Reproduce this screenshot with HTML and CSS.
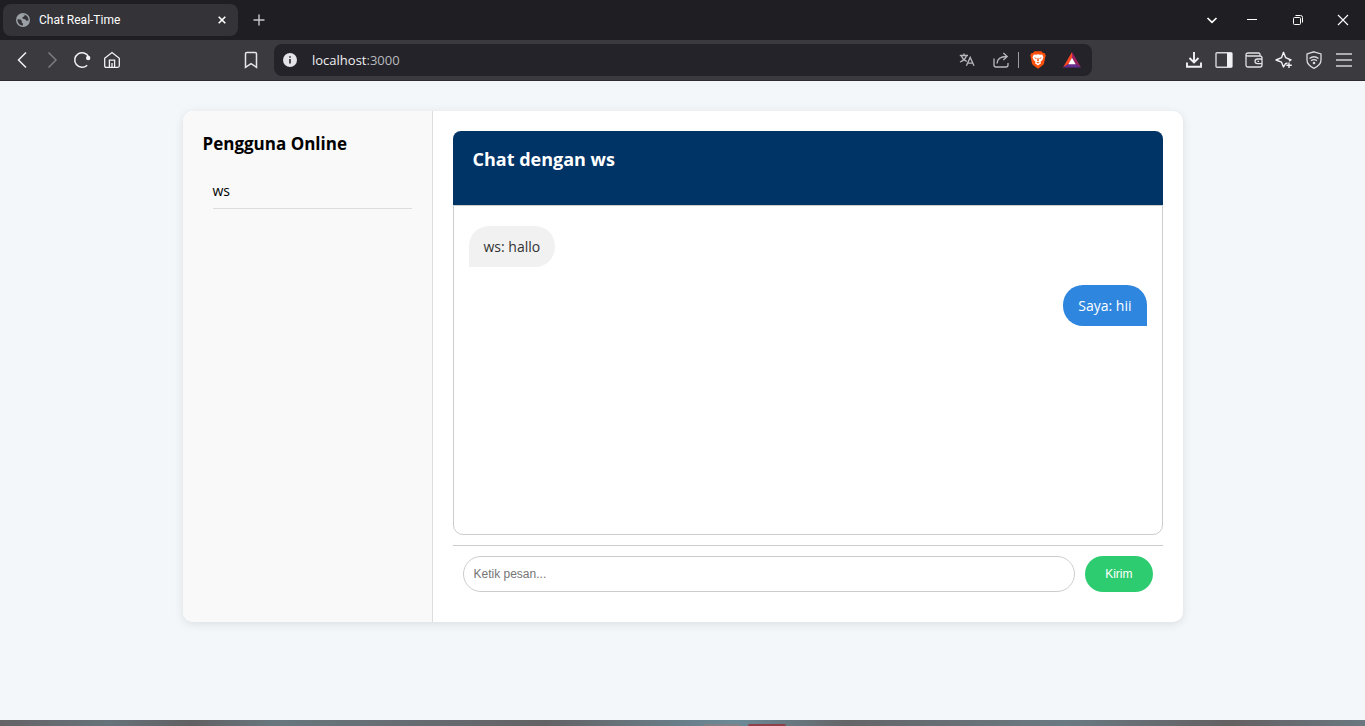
FILE: index.html
```html
<!DOCTYPE html>
<html lang="id">
<head>
<meta charset="utf-8">
<meta name="viewport" content="width=device-width, initial-scale=1">
<title>Chat Real-Time</title>
<link rel="stylesheet" href="styles.css">
</head>
<body>
<header class="browser">
  <div class="tabstrip">
    <div class="tab">
      <svg class="icon" width="14" height="14" viewBox="0 0 14 14"><circle cx="7" cy="7" r="7" fill="#9aa0a6"/><path d="M1.5 6.2 4.6 6.6 6 8.2 5.6 9.6 7 10.6V12.4C4 12.6 1.4 10 1.5 6.2ZM6.8 1.4 9 1.8 8 3.4 6.4 4.2 6.8 5.8 9 6.2 10.6 7.8 12.5 7.4C12.8 4 10 1.2 6.8 1.4Z" fill="#343338"/></svg>
      <span class="tab-title">Chat Real-Time</span>
      <button class="plain" aria-label="Tutup tab"><svg class="icon" width="8" height="8" viewBox="0 0 8 8"><path d="M.7.7 7.3 7.3M7.3.7.7 7.3" stroke="#fff" stroke-width="1.6"/></svg></button>
    </div>
    <button class="plain new-tab" aria-label="Tab baru"><svg class="icon" width="12" height="12" viewBox="0 0 12 12"><path d="M6 .5V11.5M.5 6H11.5" stroke="#c8c8cc" stroke-width="1.4"/></svg></button>
    <div class="window-buttons">
      <button class="plain" aria-label="Cari tab"><svg class="icon" width="12" height="12" viewBox="0 0 12 12"><path d="M1.5 4 6 8.3 10.500 4" fill="none" stroke="#fff" stroke-width="1.7"/></svg></button>
      <button class="plain" aria-label="Kecilkan"><svg class="icon" width="12" height="12" viewBox="0 0 12 12"><path d="M1 5.500H11" stroke="#fff"/></svg></button>
      <button class="plain" aria-label="Pulihkan"><svg class="icon" width="12" height="12" viewBox="0 0 12 12"><rect x="1.500" y="3.500" width="7" height="7" rx="1" fill="none" stroke="#fff"/><path d="M3.500 1.500H8.500Q10.500 1.500 10.500 3.500V8.500" fill="none" stroke="#fff"/></svg></button>
      <button class="plain" aria-label="Tutup"><svg class="icon" width="12" height="12" viewBox="0 0 12 12"><path d="M1 1 11 11M11 1 1 11" stroke="#fff" stroke-width="1.1"/></svg></button>
    </div>
  </div>
  <div class="toolbar">
    <div class="nav">
      <button class="plain" aria-label="Kembali"><svg class="icon" width="18" height="18" viewBox="0 0 18 18"><path d="M13 1.500 5.500 9 13 16.500" fill="none" stroke="#f2f2f4" stroke-width="1.500"/></svg></button>
      <button class="plain" aria-label="Maju"><svg class="icon" width="18" height="18" viewBox="0 0 18 18"><path d="M5.500 1.500 13 9 5.500 16.500" fill="none" stroke="#7c7b80" stroke-width="1.500"/></svg></button>
      <button class="plain" aria-label="Muat ulang"><svg class="icon" width="18" height="18" viewBox="0 0 18 18"><path d="M14.200 14.200A7.300 7.300 0 1 1 15.600 5.800" fill="none" stroke="#f2f2f4" stroke-width="1.500"/><circle cx="15.200" cy="7" r="2.200" fill="#f2f2f4"/></svg></button>
      <button class="plain" aria-label="Beranda"><svg class="icon" width="18" height="18" viewBox="0 0 18 18"><path d="M1.700 7.200 9 1.500 16.300 7.200V14.800Q16.300 16.300 14.800 16.300H3.200Q1.700 16.300 1.700 14.800ZM6.400 16V9.200H11.600V16M9 12V16" fill="none" stroke="#f2f2f4" stroke-width="1.300"/></svg></button>
      <button class="plain bookmark" aria-label="Markah"><svg class="icon" width="18" height="18" viewBox="0 0 18 18"><path d="M3.500 16.300V2.800Q3.500 1.500 4.800 1.500H13.200Q14.500 1.500 14.500 2.800V16.300L9 12.600Z" fill="none" stroke="#e6e6e9" stroke-width="1.500"/></svg></button>
    </div>
    <div class="address">
      <svg class="icon" width="14" height="14" viewBox="0 0 14 14"><circle cx="7" cy="7" r="7" fill="#e3e3e8"/><path d="M7 6V10.500M7 3.300V4.800" fill="none" stroke="#29282d" stroke-width="1.600"/></svg>
      <span class="url">localhost<span class="port">:3000</span></span>
      <button class="plain" aria-label="Terjemahkan"><svg class="icon" width="16" height="16" viewBox="0 0 16 16"><path d="M.8 3.500H9M4.900 1.500V3.500M2.300 3.500C3.300 6.500 5.500 8.500 7.800 9.300M7.500 3.500C6.500 7 3.800 9 1 10M7.400 13.800 11.200 5.400 15 13.800M8.600 11.200H13.800" fill="none" stroke="#b7b7bc" stroke-width="1.300"/></svg></button>
      <button class="plain" aria-label="Bagikan"><svg class="icon" width="16" height="16" viewBox="0 0 16 16"><path d="M1 6.500V13Q1 15 3 15H13Q15 15 15 13V11M4 11.500C4.300 7 7 4.500 13.500 4.500M10.300 1 14.200 4.500 10.300 8" fill="none" stroke="#b7b7bc" stroke-width="1.300"/></svg></button>
      <span class="divider"></span>
      <button class="plain" aria-label="Brave Shields"><svg class="icon" width="18" height="18" viewBox="0 0 18 18"><path d="M5.500.3H12.500L14 2 15.500 2 16.800 4.500 16.300 6 15 12.500Q14.600 14 9 17.700 3.400 14 3 12.500L1.700 6 1.200 4.500 2.500 2 4 2Z" fill="#fb4f0a"/><path d="M4.800 3.400 7 3.800 9 3.200 11 3.800 13.200 3.400 14.500 6.200 13.200 9.300 11.500 10.800 12 12.300 9 14.600 6 12.300 6.500 10.800 4.800 9.300 3.500 6.200Z" fill="#fff"/><path d="M5 6.300 7.600 7 7.200 8.200ZM13 6.300 10.400 7 10.800 8.200ZM8.500 7H9.500L9.900 9.800 9 10.500 8.100 9.800ZM7.200 11.500 9 10.900 10.800 11.500 9 12.600Z" fill="#fb4f0a"/></svg></button>
      <button class="plain" aria-label="Brave Rewards"><svg class="icon" width="18" height="18" viewBox="0 0 18 18"><path d="M9 1 0 16.500 5.500 13 9 7Z" fill="#ff4724"/><path d="M9 1 18 16.500 12.500 13 9 7Z" fill="#9e1f63"/><path d="M0 16.500H18L12.500 13H5.500Z" fill="#662d91"/><path d="M9 6.800 12.700 13.200H5.300Z" fill="#fff"/></svg></button>
    </div>
    <div class="tools">
      <button class="plain" aria-label="Unduhan"><svg class="icon" width="18" height="18" viewBox="0 0 18 18"><path d="M9 1V11M4.500 7 9 11.400 13.500 7M2 11.500V15.700H16V11.500" fill="none" stroke="#f2f2f4" stroke-width="1.900"/></svg></button>
      <button class="plain" aria-label="Bilah samping"><svg class="icon" width="18" height="18" viewBox="0 0 18 18"><rect x="1" y="1.800" width="16" height="14.400" rx="1" fill="none" stroke="#d8d8dc" stroke-width="1.400"/><path d="M12 2H17V16H12Z" fill="#f2f2f4"/></svg></button>
      <button class="plain" aria-label="Dompet"><svg class="icon" width="18" height="18" viewBox="0 0 18 18"><path d="M15 4.500V3.500Q15 2 13.500 2H3Q1 2 1 3.700 1 5 3 5H15Q17 5 17 7V14Q17 16 15 16H3Q1 16 1 14V3.700M17 8H12.500Q10 8 10 10.300T12.500 12.600H17M12.500 10.300H14" fill="none" stroke="#e2e2e5" stroke-width="1.300"/></svg></button>
      <button class="plain" aria-label="Leo AI"><svg class="icon" width="18" height="18" viewBox="0 0 18 18"><path d="M12.500 12 10.500 12.600 8.500 16 6.500 11.200 1 9 6.500 6.700 8.500 1.300 10.700 6.700 16 9 14 10.200M14 11.500V17M11.300 14.300H16.800" fill="none" stroke="#f2f2f4" stroke-width="1.400" stroke-linejoin="round"/></svg></button>
      <button class="plain" aria-label="VPN"><svg class="icon" width="18" height="18" viewBox="0 0 18 18"><path d="M9 .8 16 3V9Q16 14 9 17.300 2 14 2 9V3Z" fill="none" stroke="#dcdce0" stroke-width="1.300"/><path d="M4.500 7.500Q9 4 13.500 7.500M6 9.800Q9 7.500 12 9.800" fill="none" stroke="#dcdce0" stroke-width="1.300"/><circle cx="9" cy="12" r="1.300" fill="#dcdce0"/></svg></button>
      <button class="plain" aria-label="Menu"><svg class="icon" width="18" height="18" viewBox="0 0 18 18"><path d="M1 3H17M1 9H17M1 15H17" stroke="#d2d2d5" stroke-width="1.500"/></svg></button>
    </div>
  </div>
</header>
<main class="page">
  <div class="chat-container">
    <aside class="sidebar">
      <h3 class="heading">Pengguna Online</h3>
      <ul class="users"><li class="user">ws</li></ul>
    </aside>
    <section class="chat">
      <div class="chat-header"><h3 class="heading chat-title">Chat dengan ws</h3></div>
      <div class="messages">
        <div class="message received">ws: hallo</div>
        <div class="message sent">Saya: hii</div>
      </div>
      <form class="composer">
        <input class="message-input" type="text" placeholder="Ketik pesan..." aria-label="Ketik pesan">
        <button class="send" type="button">Kirim</button>
      </form>
    </section>
  </div>
</main>
<footer class="taskbar"><span class="task"></span><span class="task active"></span></footer>
</body>
</html>
```
FILE: styles.css
```css
* { box-sizing: border-box; }
body {
  margin: 0;
  min-height: 100vh;
  display: flex;
  flex-direction: column;
  background: #f3f7fa;
  color: #000;
  font-family: "Segoe UI", "Open Sans", sans-serif;
}
.icon { display: block; flex: none; }
.plain {
  display: flex;
  align-items: center;
  justify-content: center;
  padding: 0;
  border: 0;
  background: none;
}
.tabstrip {
  display: flex;
  align-items: center;
  height: 40px;
  padding-left: 3px;
  background: #1f1e23;
}
.tab {
  display: flex;
  align-items: center;
  gap: 9px;
  width: 235px;
  height: 32px;
  padding: 0 12px 0 13px;
  border-radius: 8px;
  background: #343338;
}
.tab-title {
  flex: 1;
  color: #fff;
  font-family: "Segoe UI", Roboto, sans-serif;
  font-size: 12px;
}
.new-tab { width: 42px; height: 32px; }
.window-buttons { display: flex; margin-left: auto; }
.window-buttons .plain { width: 46px; height: 40px; }
.window-buttons .plain:first-child { width: 34px; }
.window-buttons .plain:last-child { width: 44px; }
.toolbar {
  display: flex;
  align-items: center;
  height: 41px;
  background: #3b3a3f;
  border-bottom: 1px solid #2d2b30;
}
.nav {
  display: flex;
  gap: 12px;
  width: 274px;
  padding: 0 14px 0 13px;
}
.bookmark { margin-left: auto; }
.address {
  flex: 1;
  display: flex;
  align-items: center;
  height: 32px;
  padding: 0 11px 0 9px;
  border-radius: 8px;
  background: #242329;
}
.url {
  flex: 1;
  padding-left: 15px;
  color: #f0f0f2;
  font-size: 13px;
}
.port { color: #b9b9be; }
.address .plain { width: 34px; }
.address .plain:last-child { width: 18px; margin-left: 8px; }
.divider { width: 1px; height: 16px; background: #9b9ba0; margin-right: 2px; }
.tools {
  display: flex;
  justify-content: flex-end;
  gap: 12px;
  width: 273px;
  padding-right: 12px;
}
.page { flex: 1; padding: 30px 20px; }
.chat-container {
  display: flex;
  max-width: 1000px;
  margin: 0 auto;
  overflow: hidden;
  border-radius: 10px;
  background: #fff;
  box-shadow: 0 2px 10px rgba(0, 0, 0, 0.1);
}
.sidebar {
  width: 250px;
  padding: 20px;
  border-right: 1px solid #ddd;
  background: #f9f9f9;
}
.heading {
  margin: 0;
  font-size: 17px;
  line-height: 26px;
}
.chat-title { font-size: 18px; }
.users { margin: 0; padding: 17px 0 0 10px; list-style: none; }
.user {
  padding: 8px 0;
  border-bottom: 1px solid #ddd;
  font-size: 14px;
  line-height: 18px;
}
.chat { flex: 1; padding: 20px; }
.chat-header {
  padding: 15px 20px 33px;
  border-radius: 8px 8px 0 0;
  background: #003366;
  color: #fff;
}
.messages {
  display: flex;
  flex-direction: column;
  gap: 18px;
  min-height: 330px;
  padding: 20px 15px;
  border: 1px solid #ccc;
  border-radius: 0 0 10px 10px;
}
.message {
  padding: 10px 15px;
  font-size: 14px;
  line-height: 21px;
}
.received {
  align-self: flex-start;
  border-radius: 20px 20px 20px 0;
  background: #f1f1f1;
  color: #333;
}
.sent {
  align-self: flex-end;
  border-radius: 20px 20px 0 20px;
  background: #2e86de;
  color: #fff;
}
.composer {
  display: flex;
  gap: 10px;
  margin-top: 10px;
  padding: 10px;
  border-top: 1px solid #ccc;
}
.message-input {
  flex: 1;
  min-width: 0;
  height: 36px;
  padding: 10px;
  border: 1px solid #ccc;
  border-radius: 20px;
  background: #fff;
  font-family: Arial, "Liberation Sans", sans-serif;
  font-size: 12px;
}
.message-input::placeholder { color: #757575; }
.send {
  padding: 10px 20px;
  border: 0;
  border-radius: 20px;
  background: #2ecc71;
  color: #fff;
  font-family: Arial, "Liberation Sans", sans-serif;
  font-size: 12px;
}
.taskbar {
  display: flex;
  justify-content: center;
  align-items: flex-end;
  gap: 7px;
  height: 6px;
  padding-left: 124px;
  background: linear-gradient(90deg, #656366, #66737a 8%, #626062 14%, #68777e 20%, #646265 40%, #6b8a98 54%, #656568 62%, #6a7a82 78%, #646062 90%, #6a7880);
}
.task { width: 38px; height: 2px; border-radius: 3px 3px 0 0; background: #818185; }
.active { background: #8e3f47; }
```
